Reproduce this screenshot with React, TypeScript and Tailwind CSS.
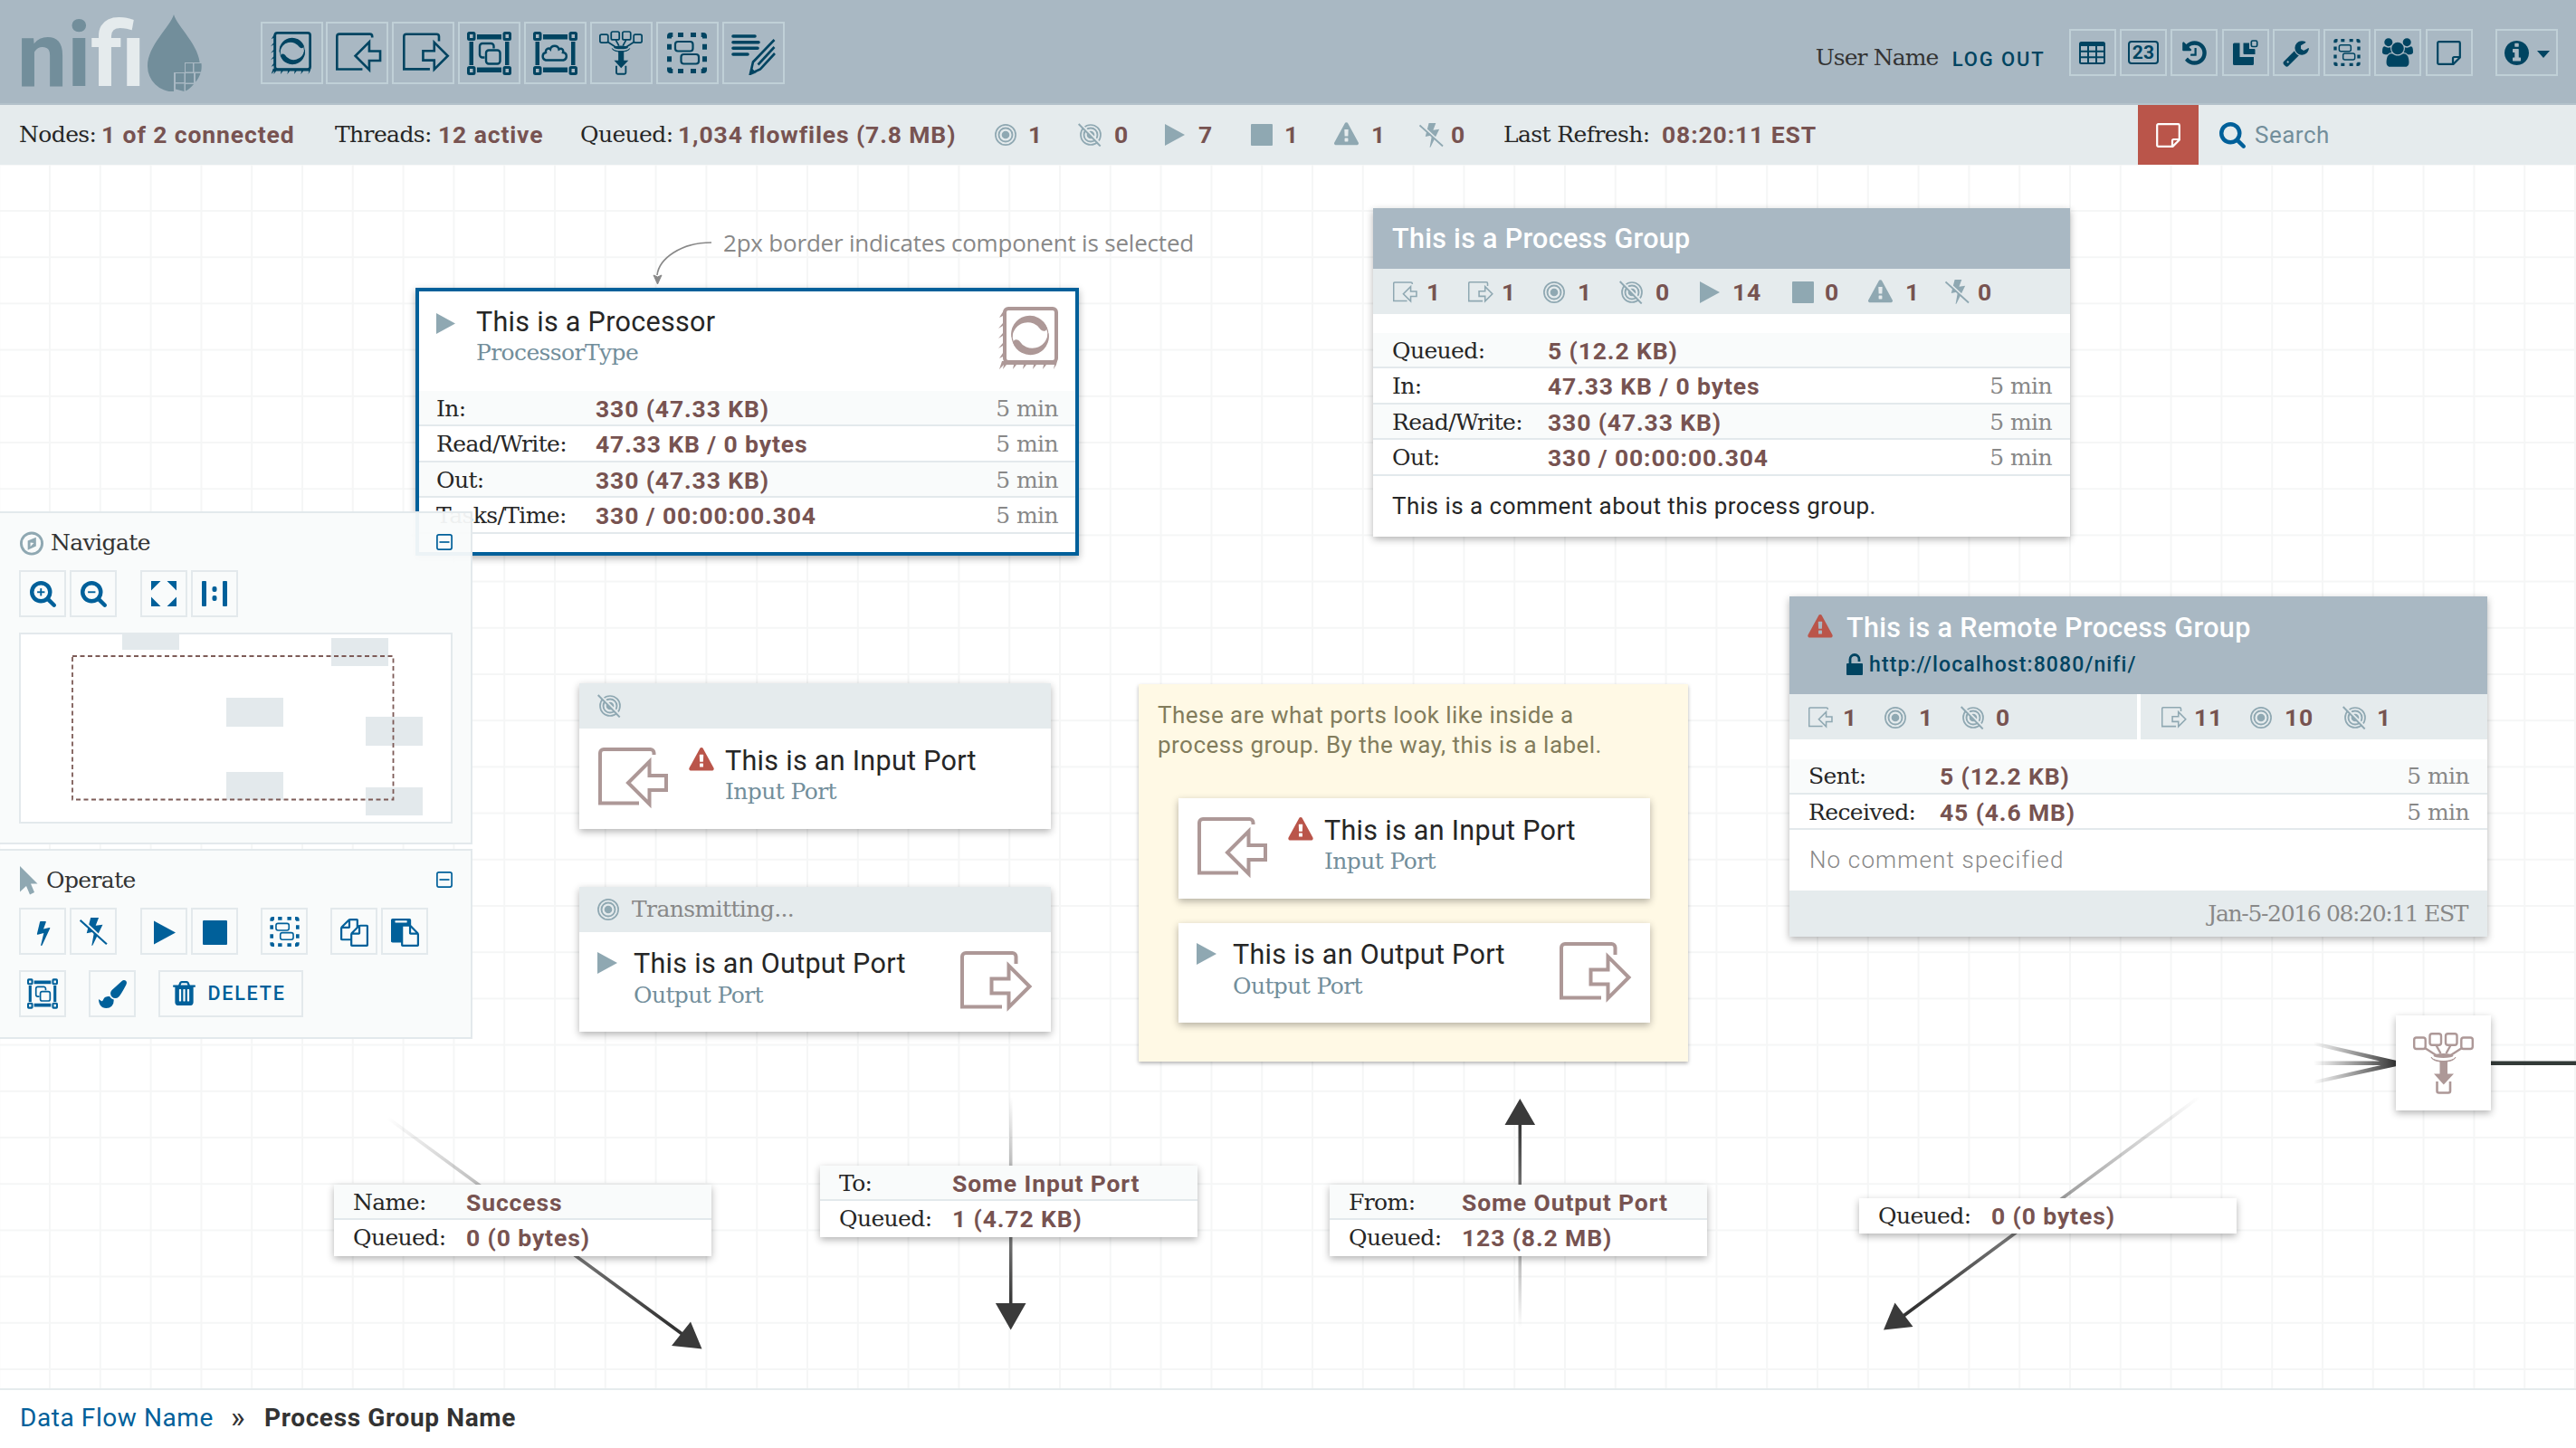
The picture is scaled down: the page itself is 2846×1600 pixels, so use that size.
import type { ReactNode } from "react";

const slab = "font-['Roboto_Slab','DejaVu_Serif',serif] tracking-[-0.6px]";
const shadow = "shadow-[0_3px_8px_rgba(0,0,0,0.3)]";

interface IconProps {
  className?: string;
}

/* ---------- component icons ---------- */

function ProcessorIcon({ className }: IconProps) {
  return (
    <svg viewBox="0 0 66 69" className={className} fill="currentColor">
      <rect x="7" y="2" width="57" height="59" rx="4" fill="none" stroke="currentColor" strokeWidth="4" />
      <path d="M6 60h59l-1 4-3 5 1-5h-9l-4 5 1-5h-8l-4 5 1-5h-8l-4 5 1-5h-8l-4 5 1-5H9l-4 5 1-5-5 5 3-9z" />
      <path d="M6 4 1 12l4-2v8l-5 6 5-3v8l-5 6 5-3v8l-5 6 5-3v8l-4 6 6-3V4z" />
      <path d="M14.500 34A20.500 20.500 0 0 1 54 23.500q-2 5.500-7 2A17 17 0 0 0 15.500 33z" />
      <path d="M55.500 29A20.500 20.500 0 0 1 16 39.500q2-5.500 7-2A17 17 0 0 0 54.500 30z" />
      <circle cx="35" cy="31.500" r="20" fill="none" stroke="currentColor" strokeWidth="1.200" />
    </svg>
  );
}

function InputPortIcon({ className, weight = 4 }: IconProps & { weight?: number }) {
  return (
    <svg viewBox="0 0 78 68" className={className} fill="none" stroke="currentColor" strokeWidth={weight}>
      <path d="M61.500 8V6a4 4 0 0 0-4-4H6a4 4 0 0 0-4 4v55.500h43" />
      <path d="M56.500 15.500V31H75v16H56.500v15.500L33 39z" />
    </svg>
  );
}

function OutputPortIcon({ className, weight = 4 }: IconProps & { weight?: number }) {
  return (
    <svg viewBox="0 0 80 68" className={className} fill="none" stroke="currentColor" strokeWidth={weight}>
      <path d="M61.500 14V6a4 4 0 0 0-4-4H6a4 4 0 0 0-4 4v55.500h44" />
      <path d="M53.500 16v14.500h-19v16h19V62l23-23z" />
    </svg>
  );
}

function GroupFrame() {
  return (
    <g>
      <path d="M11 3h27v5.500H11zM11 39.500h27V45H11zM2.500 11H7v26H2.500zM42 11h4.500v26H42z" fill="currentColor" />
      <g fill="none" stroke="currentColor" strokeWidth="3">
        <rect x="1.500" y="1.500" width="6.500" height="7" rx="1" />
        <rect x="41" y="1.500" width="6.500" height="7" rx="1" />
        <rect x="1.500" y="39.500" width="6.500" height="7" rx="1" />
        <rect x="41" y="39.500" width="6.500" height="7" rx="1" />
      </g>
    </g>
  );
}

function ProcessGroupIcon({ className }: IconProps) {
  return (
    <svg viewBox="0 0 49 48" className={className} fill="none" stroke="currentColor">
      <g stroke="none">
        <GroupFrame />
      </g>
      <path d="M19.500 28.500H17a3 3 0 0 1-3-3V16a3 3 0 0 1 3-3h9.500a3 3 0 0 1 3 3v2.500" strokeWidth="2.400" />
      <rect x="21" y="20.500" width="15.500" height="15" rx="3" strokeWidth="2.400" />
    </svg>
  );
}

function RemoteGroupIcon({ className }: IconProps) {
  return (
    <svg viewBox="0 0 49 48" className={className} fill="none" stroke="currentColor">
      <g stroke="none">
        <GroupFrame />
      </g>
      <path
        d="M14 31.500c-4.500-1-4.500-7.500 0-8.500-.5-4 3-5.500 5-3.500 1-5 8.500-5 9.500 0 3-2 5.500.5 4.500 3.500 5 .5 5 7.500.5 8.500z"
        strokeWidth="2.400"
      />
    </svg>
  );
}

function FunnelIcon({ className }: IconProps) {
  return (
    <svg viewBox="0 0 67 68" className={className} fill="none" stroke="currentColor" strokeWidth="2.400">
      <rect x="1.200" y="5.500" width="12.500" height="12.500" rx="2.500" />
      <rect x="18.500" y="1.200" width="12.500" height="12.500" rx="2.500" />
      <rect x="36" y="1.200" width="12.500" height="12.500" rx="2.500" />
      <rect x="53.300" y="5.500" width="12.500" height="12.500" rx="2.500" />
      <path d="m13 17 14 9M25.500 14l5 9M41.500 14l-5 9M54 17l-14 9" />
      <ellipse cx="33.500" cy="25.500" rx="11" ry="2.600" fill="currentColor" stroke="none" />
      <path d="M20 27c2 7 25 7 27 0-1 1-1 2-4 3-6 2-13 2-19 0-3-1-3-2-4-3z" fill="currentColor" strokeWidth="1" />
      <path d="M29.500 31H38v14.500h7L33.800 57.500 23 45.500h6.500z" fill="currentColor" stroke="none" />
      <path d="M26.500 54v10.500a2 2 0 0 0 2 2h10.500a2 2 0 0 0 2-2V54" strokeWidth="2.600" />
    </svg>
  );
}

function TemplateIcon({ className }: IconProps) {
  return (
    <svg viewBox="0 0 44 45" className={className} fill="none" stroke="currentColor">
      <path
        d="M0 6.500V4a4 4 0 0 1 4-4h2.300v5H5v1.500zM12 0h6v5h-6zM26 0h6v5h-6zM37.700 0H40a4 4 0 0 1 4 4v2.500h-5V5h-1.300zM0 12.700h5v6H0zM0 26.300h5v6H0zM39 12.700h5v6h-5zM39 26.300h5v6h-5zM0 38.500h5V40h1.300v5H4a4 4 0 0 1-4-4zM12 40h6v5h-6zM26 40h6v5h-6zM44 38.500V41a4 4 0 0 1-4 4h-2.300v-5H39v-1.500z"
        fill="currentColor"
        stroke="none"
      />
      <rect x="9" y="10" width="19.500" height="10.500" rx="3" strokeWidth="2.200" />
      <rect x="15.500" y="24" width="19.500" height="10.500" rx="3" strokeWidth="2.200" />
    </svg>
  );
}

function LabelIcon({ className }: IconProps) {
  return (
    <svg viewBox="0 0 49 45" className={className} fill="none" stroke="currentColor" strokeWidth="3.600" strokeLinecap="round">
      <path d="M2 2h24M2 8.700h28M2 15.300h27M2 22h16" />
      <path d="M47.500 6 24 30.500l-3 13 11-5L48 21" strokeWidth="2.600" strokeLinecap="butt" />
      <path d="M47.500 14 29.500 33.500" strokeWidth="2.600" strokeLinecap="butt" />
      <path d="m20.500 44.500 2-7 4.500 4.500z" fill="currentColor" strokeWidth="0.500" />
    </svg>
  );
}

/* ---------- status icons ---------- */

function TransmittingIcon({ className }: IconProps) {
  return (
    <svg viewBox="0 0 24 24" className={className} fill="none" stroke="currentColor" strokeWidth="1.700">
      <circle cx="12" cy="12" r="11.100" />
      <circle cx="12" cy="12" r="7.500" strokeWidth="1.900" />
      <circle cx="12" cy="12" r="4.300" fill="currentColor" stroke="none" />
    </svg>
  );
}

function NotTransmittingIcon({ className, back = "#e5ebed" }: IconProps & { back?: string }) {
  return (
    <svg viewBox="0 0 26 26" className={className} fill="none" stroke="currentColor" strokeWidth="1.700">
      <circle cx="14" cy="13" r="11" />
      <circle cx="14" cy="13" r="7.500" strokeWidth="1.900" />
      <circle cx="14" cy="13" r="4.300" fill="currentColor" stroke="none" />
      <path d="M2.500.500 26 24" stroke={back} strokeWidth="2" />
      <path d="m.700 1 24 24.500" strokeWidth="1.900" />
    </svg>
  );
}

function PlayIcon({ className }: IconProps) {
  return (
    <svg viewBox="0 0 22 24" className={className} fill="currentColor">
      <path d="M0 0v24l22-12z" />
    </svg>
  );
}

function StopIcon({ className }: IconProps) {
  return (
    <svg viewBox="0 0 24 24" className={className} fill="currentColor">
      <rect width="24" height="24" rx="1" />
    </svg>
  );
}

function WarningIcon({ className }: IconProps) {
  return (
    <svg viewBox="0 0 1792 1700" className={className} fill="currentColor">
      <path d="M1024 1375v-190q0-14-9.500-23.500t-22.500-9.500h-192q-13 0-22.500 9.500t-9.500 23.500v190q0 14 9.500 23.500t22.500 9.500h192q13 0 22.500-9.500t9.500-23.500zm-2-374l18-459q0-12-10-19-13-11-24-11h-220q-11 0-24 11-10 7-10 21l17 457q0 10 10 16.500t24 6.500h185q14 0 23.500-6.500t10.500-16.500zm-14-934l768 1408q35 63-2 126-17 29-46.500 46t-63.500 17h-1536q-34 0-63.500-17t-46.500-46q-37-63-2-126l768-1408q17-31 47-49t65-18 65 18 47 49z" />
    </svg>
  );
}

function BoltIcon({ className }: IconProps) {
  return (
    <svg viewBox="430 0 920 1792" className={className} fill="currentColor">
      <path d="M1333 566q18 20 7 44l-540 1157q-13 25-42 25-4 0-14-2-17-5-25.500-19t-4.500-30l197-808-406 101q-4 1-12 1-18 0-31-11-18-15-13-39l201-825q4-14 16-23t28-9h328q19 0 32 12.500t13 29.500q0 8-5 18l-171 463 396-98q8-2 12-2 19 0 34 15z" />
    </svg>
  );
}

function DisabledIcon({ className, back = "#e5ebed" }: IconProps & { back?: string }) {
  return (
    <svg viewBox="0 0 28 28" className={className}>
      <path d="M11 0h8l-3 8 7-1-10 20.500-1 .5 2.500-14L7 15.500z" fill="currentColor" />
      <path d="M2 1.500 28 26" stroke={back} strokeWidth="2.200" />
      <path d="m.500 2.500 26.500 24" stroke="currentColor" strokeWidth="1.900" />
    </svg>
  );
}

/* ---------- toolbar glyphs ---------- */

function Glyph({ d, className, box = "0 0 1792 1792" }: { d: string; className?: string; box?: string }) {
  return (
    <svg viewBox={box} className={className} fill="currentColor">
      <path d={d} />
    </svg>
  );
}

const historyPath =
  "M1664 896q0 156-61 298t-164 245-245 164-298 61q-172 0-327-72.500t-264-204.500q-7-10-6.500-22.500t8.500-20.500l137-138q10-9 25-9 16 2 23 12 73 95 179 147t225 52q104 0 198.500-40.500t163.500-109.500 109.500-163.500 40.500-198.500-40.500-198.500-109.500-163.500-163.500-109.500-198.500-40.500q-98 0-188 35.500t-160 101.500l137 138q31 30 14 69-17 40-59 40h-448q-26 0-45-19t-19-45v-448q0-42 40-59 39-17 69 14l130 129q107-101 244.500-156.500t284.500-55.500q156 0 298 61t245 164 164 245 61 298zm-640-288v448q0 14-9 23t-23 9h-320q-14 0-23-9t-9-23v-64q0-14 9-23t23-9h224v-352q0-14 9-23t23-9h64q14 0 23 9t9 23z";
const wrenchPath =
  "M448 1472q0-26-19-45t-45-19-45 19-19 45 19 45 45 19 45-19 19-45zm644-420l-682 682q-37 37-90 37-52 0-91-37l-106-108q-38-36-38-90 0-53 38-91l681-681q39 98 114.500 173.500t173.500 114.500zm634-435q0 39-23 106-47 134-164.500 217.500t-258.500 83.500q-185 0-316.500-131.500t-131.500-316.500 131.500-316.500 316.500-131.500q58 0 121.500 16.500t107.500 46.500q16 11 16 28t-16 28l-293 169v224l193 107q5-3 79-48.500t135.500-81 70.500-35.500q15 0 23.500 10t8.500 25z";
const usersPath =
  "M593 896q-162 5-265 128h-134q-82 0-138-40.500t-56-118.500q0-353 124-353 6 0 43.500 21t97.500 42.500 119 21.500q67 0 133-23-5 37-5 66 0 139 81 256zm1071 637q0 120-73 189.500t-194 69.500h-874q-121 0-194-69.500t-73-189.500q0-53 3.500-103.500t14-109 26.500-108.500 43-97.500 62-81 85.500-53.500 111.500-20q10 0 43 21.500t73 48 107 48 135 21.500 135-21.500 107-48 73-48 43-21.500q61 0 111.500 20t85.500 53.500 62 81 43 97.500 26.500 108.500 14 109 3.500 103.500zm-1024-1277q0 106-75 181t-181 75-181-75-75-181 75-181 181-75 181 75 75 181zm704 384q0 159-112.500 271.500t-271.500 112.500-271.500-112.500-112.500-271.500 112.500-271.500 271.500-112.500 271.500 112.500 112.500 271.500zm576 225q0 78-56 118.500t-138 40.500h-134q-103-123-265-128 81-117 81-256 0-29-5-66 66 23 133 23 59 0 119-21.500t97.500-42.500 43.500-21q124 0 124 353zm-128-609q0 106-75 181t-181 75-181-75-75-181 75-181 181-75 181 75 75 181z";
const infoPath =
  "M1152 1376v-160q0-14-9-23t-23-9h-96v-512q0-14-9-23t-23-9h-320q-14 0-23 9t-9 23v160q0 14 9 23t23 9h96v320h-96q-14 0-23 9t-9 23v160q0 14 9 23t23 9h448q14 0 23-9t9-23zm-128-896v-160q0-14-9-23t-23-9h-192q-14 0-23 9t-9 23v160q0 14 9 23t23 9h192q14 0 23-9t9-23zm640 416q0 209-103 385.500t-279.500 279.500-385.500 103-385.500-103-279.500-279.500-103-385.500 103-385.500 279.500-279.500 385.500-103 385.500 103 279.500 279.500 103 385.500z";
const searchPath =
  "M1216 832q0-185-131.500-316.500t-316.500-131.500-316.500 131.500-131.500 316.500 131.500 316.500 316.500 131.500 316.500-131.500 131.500-316.500zm512 832q0 52-38 90t-90 38q-54 0-90-38l-343-342q-179 124-399 124-143 0-273.500-55.500t-225-150-150-225-55.500-273.500 55.500-273.500 150-225 225-150 273.500-55.500 273.500 55.500 225 150 150 225 55.500 273.500q0 220-124 399l343 343q37 37 37 90z";
const trashPath =
  "M704 1376v-704q0-14-9-23t-23-9h-64q-14 0-23 9t-9 23v704q0 14 9 23t23 9h64q14 0 23-9t9-23zm256 0v-704q0-14-9-23t-23-9h-64q-14 0-23 9t-9 23v704q0 14 9 23t23 9h64q14 0 23-9t9-23zm256 0v-704q0-14-9-23t-23-9h-64q-14 0-23 9t-9 23v704q0 14 9 23t23 9h64q14 0 23-9t9-23zm-544-992h448l-48-117q-7-9-17-11h-317q-10 2-17 11zm928 32v64q0 14-9 23t-23 9h-96v948q0 83-47 143.500t-113 60.500h-832q-66 0-113-58.500t-47-141.500v-952h-96q-14 0-23-9t-9-23v-64q0-14 9-23t23-9h309l70-167q15-37 54-63t79-26h320q40 0 79 26t54 63l70 167h309q14 0 23 9t9 23z";
const copyPath =
  "M1696 384q40 0 68 28t28 68v1216q0 40-28 68t-68 28h-960q-40 0-68-28t-28-68v-288h-544q-40 0-68-28t-28-68v-672q0-40 20-88t48-76l408-408q28-28 76-48t88-20h416q40 0 68 28t28 68v328q68-40 128-40h416zm-544 213l-299 299h299v-299zm-640-384l-299 299h299v-299zm196 647l316-316v-416h-384v416q0 40-28 68t-68 28h-416v640h512v-256q0-40 20-88t48-76zm956 804v-1152h-384v416q0 40-28 68t-68 28h-416v640h896z";
const pastePath =
  "M768 1664h896v-640h-416q-40 0-68-28t-28-68v-416h-384v1152zm256-1440v-64q0-13-9.500-22.500t-22.500-9.500h-704q-13 0-22.500 9.500t-9.500 22.500v64q0 13 9.500 22.500t22.500 9.500h704q13 0 22.500-9.500t9.500-22.500zm256 672h299l-299-299v299zm512 128v672q0 40-28 68t-68 28h-960q-40 0-68-28t-28-68v-160h-544q-40 0-68-28t-28-68v-1344q0-40 28-68t68-28h1088q40 0 68 28t28 68v328q21 13 36 28l408 408q28 28 48 76t20 88z";
const brushPath =
  "M1615 0q70 0 122.500 46.500t52.500 116.500q0 63-45 151-332 629-465 752-97 91-218 91-126 0-216.500-92.500t-90.500-219.500q0-128 92-212l638-579q59-54 130-54zm-909 1034q39 76 106.500 130t150.500 76l1 71q4 213-129.500 347t-348.500 134q-123 0-218-46.500t-152.500-127.500-86.500-183-29-220q7 5 41 30t62 44.500 59 36.500 46 17q41 0 55-37 25-66 57.500-112.500t69.500-76 88-47.500 103-25.500 125-10.500z";

function TableIcon() {
  return (
    <svg viewBox="0 0 29 25" className="h-[25px] w-[29px]" fill="currentColor">
      <path
        fillRule="evenodd"
        d="M2.500 0h24A2.500 2.500 0 0 1 29 2.500v20a2.500 2.500 0 0 1-2.500 2.500h-24A2.500 2.500 0 0 1 0 22.500v-20A2.500 2.500 0 0 1 2.500 0zM2 5v4.700h7V5zm9 0v4.700h7V5zm9 0v4.700h7V5zM2 11.700v4.600h7v-4.600zm9 0v4.600h7v-4.600zm9 0v4.600h7v-4.600zM2 18.300V23h7v-4.700zm9 0V23h7v-4.700zm9 0V23h7v-4.700z"
      />
    </svg>
  );
}

function ProvenanceIcon() {
  return (
    <svg viewBox="0 0 28 28" className="-mt-[1px] h-[28px] w-[28px]" fill="currentColor">
      <path d="M1.500 3.500h6V19H23v7.500a1.500 1.500 0 0 1-1.500 1.500h-20A1.500 1.500 0 0 1 0 26.500V5a1.500 1.500 0 0 1 1.500-1.500z" />
      <path d="M11.500 3.500H18V10h5.500a1 1 0 0 1 1 1v5h-12a1 1 0 0 1-1-1z" />
      <rect x="20.300" y="1" width="6.400" height="6.500" rx="1.500" fill="none" stroke="currentColor" strokeWidth="1.700" />
    </svg>
  );
}

function NoteIcon() {
  return (
    <svg viewBox="0 0 27 27" className="size-[27px]" fill="none" stroke="currentColor" strokeWidth="2.200">
      <path d="M2.500 1.200h22a1.300 1.300 0 0 1 1.300 1.300v16l-7.300 7.300h-16a1.300 1.300 0 0 1-1.300-1.300v-22a1.300 1.300 0 0 1 1.300-1.300z" />
      <path d="M18 26v-6.500a1.500 1.500 0 0 1 1.500-1.500H26" />
    </svg>
  );
}

function ZoomIcon({ plus }: { plus?: boolean }) {
  return (
    <svg viewBox="64 128 1664 1664" className="size-[29px]" fill="currentColor">
      <path d={searchPath} />
      <path d="M530 778h476v108H530z" />
      {plus && <path d="M714 594h108v476H714z" />}
    </svg>
  );
}

function FitIcon() {
  return (
    <svg viewBox="0 0 28 28" className="size-[28px]" fill="currentColor">
      <path d="M0 0h10.500L0 10.500zM28 0v10.500L17.500 0zM0 28V17.500L10.500 28zM28 28H17.500L28 17.500z" />
    </svg>
  );
}

function ActualSizeIcon() {
  return (
    <svg viewBox="0 0 28 28" className="size-[28px]" fill="currentColor">
      <rect width="5" height="28" rx="1" />
      <rect x="23" width="5" height="28" rx="1" />
      <rect x="11.500" y="6" width="5" height="6" rx="2" />
      <rect x="11.500" y="16" width="5" height="6" rx="2" />
    </svg>
  );
}

function CollapseIcon() {
  return (
    <svg viewBox="0 0 18 18" className="size-[18px] text-[#00609a]" fill="none" stroke="currentColor" strokeWidth="1.700">
      <rect x="0.900" y="0.900" width="16.200" height="16.200" rx="2" />
      <path d="M3.500 9h11" />
    </svg>
  );
}

/* ---------- top bars ---------- */

function Logo() {
  return (
    <div className="flex h-full w-[266px] items-start pl-[19px]">
      <div className="w-[144px] origin-left scale-x-[0.985] font-[Roboto] text-[100px] leading-[122px] font-bold whitespace-nowrap text-[#728e9b]">
        ni<span className="text-[#e5ebed]">fi</span>
      </div>
      <svg viewBox="0 0 60 85" className="mt-[16px] h-[85px] w-[60px]">
        <path d="M29 0c4 14 29 34 29 57a28.500 28 0 0 1-58 0C0 34 25 14 29 0z" fill="#728e9b" />
        <path d="M41 53h19v32H29V64h12z" fill="#a9b8c3" />
        <path
          d="M42 54h8v9.500h-8zM51.500 54h8c.5 4 0 7-.5 9.500h-7.500zM31 65h9.500v10H31zM42 65h9v10.500h-9zM53 65h5.500c-1.500 4-3 7-5.500 9.500zM31 76.500h9.500v8.500l-9.500-2.500zM42 77h9c-3 3.500-5.500 6-9 7.500z"
          fill="#728e9b"
        />
      </svg>
    </div>
  );
}

function Tool({ children }: { children: ReactNode }) {
  return (
    <div className="flex h-[69px] w-[69px] items-center justify-center border-2 border-[#c0d0d7]">{children}</div>
  );
}

function SmallTool({ children }: { children: ReactNode }) {
  return (
    <div className="flex h-[52px] w-[52px] items-center justify-center border-2 border-[#c0d0d7]">{children}</div>
  );
}

function Header() {
  return (
    <header className="flex h-[116px] border-b-2 border-[#b4c2cb] bg-[#a9b8c3] text-[#004461]">
      <Logo />
      <div className="mt-[24px] ml-[21.500px] flex gap-[3.900px]">
        <Tool><ProcessorIcon className="-ml-[2px] h-[47px] w-[45px]" /></Tool>
        <Tool><InputPortIcon className="ml-1 h-[45px] w-[51px]" /></Tool>
        <Tool><OutputPortIcon className="ml-[6px] h-[45px] w-[52px]" /></Tool>
        <Tool><ProcessGroupIcon className="h-[48px] w-[49px]" /></Tool>
        <Tool><RemoteGroupIcon className="h-[48px] w-[49px]" /></Tool>
        <Tool><FunnelIcon className="h-[49px] w-[48px]" /></Tool>
        <Tool><TemplateIcon className="h-[45px] w-[44px]" /></Tool>
        <Tool><LabelIcon className="mt-1 h-[45px] w-[49px]" /></Tool>
      </div>
      <div className="ml-auto flex pr-[20px]">
        <div className="mt-[46px] flex h-[36px] items-center">
          <span className="w-[151px] font-['Roboto_Slab','DejaVu_Serif',serif] text-[25px] tracking-[-0.900px] whitespace-nowrap text-[#333]">
            User Name
          </span>
          <span className="w-[129px] pt-[2px] font-[Roboto] text-[22px] font-medium tracking-[1.900px] whitespace-nowrap">LOG OUT</span>
        </div>
        <div className="mt-[32px] flex gap-[4.300px]">
          <SmallTool><TableIcon /></SmallTool>
          <SmallTool>
            <div className="flex h-[26px] w-[34px] items-center justify-center rounded-[4px] border-2 border-current font-[Roboto] text-[21px] leading-none font-bold">
              23
            </div>
          </SmallTool>
          <SmallTool><Glyph d={historyPath} className="size-[31px]" /></SmallTool>
          <SmallTool><ProvenanceIcon /></SmallTool>
          <SmallTool><Glyph d={wrenchPath} className="size-[31px]" /></SmallTool>
          <SmallTool><TemplateIcon className="h-[30px] w-[30px]" /></SmallTool>
          <SmallTool><Glyph d={usersPath} box="0 0 1920 1792" className="h-[32px] w-[34px]" /></SmallTool>
          <SmallTool><NoteIcon /></SmallTool>
          <div className="ml-[21px] flex h-[52px] w-[69px] items-center justify-center gap-[9px] border-2 border-[#c0d0d7]">
            <Glyph d={infoPath} box="128 128 1536 1536" className="size-[27px]" />
            <svg viewBox="0 0 14 8" className="mt-[4px] h-[8px] w-[14px]" fill="currentColor">
              <path d="M0 0h14L7 8z" />
            </svg>
          </div>
        </div>
      </div>
    </header>
  );
}

const valueText = "font-[Roboto] text-[26.5px] font-bold tracking-[0.88px] text-[#775351] whitespace-nowrap";
const labelText = `text-[25px] text-[#262626] whitespace-nowrap ${slab}`;
const titleText = "font-[Roboto] text-[30.5px] leading-[38px] tracking-[0.3px] whitespace-nowrap text-[#262626]";

function Count({ icon, iconWidth, value, width }: { icon: ReactNode; iconWidth: string; value: string; width: string }) {
  return (
    <div className={`flex shrink-0 items-center ${width}`}>
      <div className={`shrink-0 text-[#8fa8b2] ${iconWidth}`}>{icon}</div>
      <span className={valueText}>{value}</span>
    </div>
  );
}

function StatusBar() {
  return (
    <div className="flex h-[66px] items-center bg-[#e5ebed] pl-[21px]">
      <span className={`w-[91px] ${labelText}`}>Nodes:</span>
      <span className={`w-[258px] ${valueText}`}>1 of 2 connected</span>
      <span className={`w-[114px] ${labelText}`}>Threads:</span>
      <span className={`w-[157px] ${valueText}`}>12 active</span>
      <span className={`w-[108px] ${labelText}`}>Queued:</span>
      <span className={`w-[350px] ${valueText}`}>1,034 flowfiles (7.8 MB)</span>
      <Count icon={<TransmittingIcon className="size-[24px]" />} iconWidth="w-[37px]" value="1" width="w-[92px]" />
      <Count icon={<NotTransmittingIcon className="size-[26px]" />} iconWidth="w-[40px]" value="0" width="w-[96px]" />
      <Count icon={<PlayIcon className="h-[24px] w-[22px]" />} iconWidth="w-[37px]" value="7" width="w-[95px]" />
      <Count icon={<StopIcon className="size-[24px]" />} iconWidth="w-[37px]" value="1" width="w-[92px]" />
      <Count icon={<WarningIcon className="-mt-[2px] h-[26px] w-[27px]" />} iconWidth="w-[41px]" value="1" width="w-[94px]" />
      <Count icon={<DisabledIcon className="size-[27px]" />} iconWidth="w-[35px]" value="0" width="w-[93px]" />
      <span className={`w-[175px] ${labelText}`}>Last Refresh:</span>
      <span className={`w-[526px] ${valueText}`}>08:20:11 EST</span>
      <div className="flex h-full w-[67px] items-center justify-center bg-[#ba554a] text-white">
        <NoteIcon />
      </div>
      <Glyph d={searchPath} box="64 128 1664 1664" className="ml-[23px] size-[29px] text-[#00609a]" />
      <span className="ml-[10px] font-[Roboto] text-[26px] tracking-[0.500px] text-[#728e9b]">Search</span>
    </div>
  );
}

/* ---------- canvas cards ---------- */

interface RowProps {
  label: string;
  value: string;
  time?: string;
  labelWidth: string;
  padding?: string;
  striped?: boolean;
  last?: boolean;
}

function Row({ label, value, time, labelWidth, padding = "pr-[20px] pl-[21px]", striped, last }: RowProps) {
  return (
    <div
      className={`flex h-[39.400px] items-center ${padding} ${striped ? "bg-[#f9fbfb]" : "bg-white"} ${
        last ? "" : "border-b-2 border-[#e3e9ec] pt-[2px]"
      }`}
    >
      <span className={`${labelWidth} ${labelText}`}>{label}</span>
      <span className={valueText}>{value}</span>
      {time && <span className={`ml-auto text-[25px] text-[#888] ${slab}`}>{time}</span>}
    </div>
  );
}

function ProcessorCard() {
  const inset = "pr-[19px] pl-[19px]";
  return (
    <div className={`absolute top-[136px] left-[459px] h-[296px] w-[733px] border-4 border-[#00609a] bg-white ${shadow}`}>
      <div className="flex h-[110px] pr-[19px] pl-[19px]">
        <PlayIcon className="mt-[24px] h-[23px] w-[21px] text-[#8fa8b2]" />
        <div className="mt-[15px] ml-[23px]">
          <div className={titleText}>This is a Processor</div>
          <div className={`text-[25px] leading-[30px] text-[#728e9b] ${slab}`}>ProcessorType</div>
        </div>
        <ProcessorIcon className="mt-[17px] ml-auto h-[69px] w-[66px] text-[#ad9897]" />
      </div>
      <Row striped padding={inset} labelWidth="w-[176px]" label="In:" value="330 (47.33 KB)" time="5 min" />
      <Row padding={inset} labelWidth="w-[176px]" label="Read/Write:" value="47.33 KB / 0 bytes" time="5 min" />
      <Row striped padding={inset} labelWidth="w-[176px]" label="Out:" value="330 (47.33 KB)" time="5 min" />
      <Row padding={inset} labelWidth="w-[176px]" label="Tasks/Time:" value="330 / 00:00:00.304" time="5 min" />
    </div>
  );
}

function ProcessGroupCard() {
  return (
    <div className={`absolute top-[48px] left-[1517px] h-[363px] w-[770px] bg-white ${shadow}`}>
      <div className="flex h-[67px] items-center bg-[#a9b8c3] px-[21px] font-[Roboto] text-[30.500px] font-medium tracking-[0.300px] text-white">
        This is a Process Group
      </div>
      <div className="flex h-[50px] items-center bg-[#e5ebed] pt-[1px] pl-[22px]">
        <Count icon={<InputPortIcon weight={4.500} className="h-[24px] w-[27px]" />} iconWidth="w-[37px]" value="1" width="w-[83px]" />
        <Count icon={<OutputPortIcon weight={4.500} className="h-[24px] w-[28px]" />} iconWidth="w-[37px]" value="1" width="w-[83px]" />
        <Count icon={<TransmittingIcon className="size-[24px]" />} iconWidth="w-[38px]" value="1" width="w-[84px]" />
        <Count icon={<NotTransmittingIcon className="size-[26px]" />} iconWidth="w-[40px]" value="0" width="w-[89px]" />
        <Count icon={<PlayIcon className="h-[24px] w-[22px]" />} iconWidth="w-[36px]" value="14" width="w-[102px]" />
        <Count icon={<StopIcon className="size-[24px]" />} iconWidth="w-[36px]" value="0" width="w-[84px]" />
        <Count icon={<WarningIcon className="-mt-[2px] h-[26px] w-[27px]" />} iconWidth="w-[41px]" value="1" width="w-[85px]" />
        <Count icon={<DisabledIcon className="size-[27px]" />} iconWidth="w-[36px]" value="0" width="w-[60px]" />
      </div>
      <div className="mt-[21px]">
        <Row striped labelWidth="w-[172px]" label="Queued:" value="5 (12.2 KB)" />
        <Row labelWidth="w-[172px]" label="In:" value="47.33 KB / 0 bytes" time="5 min" />
        <Row striped labelWidth="w-[172px]" label="Read/Write:" value="330 (47.33 KB)" time="5 min" />
        <Row labelWidth="w-[172px]" label="Out:" value="330 / 00:00:00.304" time="5 min" />
      </div>
      <div className="flex h-[67px] items-center px-[21px] font-[Roboto] text-[26px] tracking-[0.480px] text-[#262626]">
        This is a comment about this process group.
      </div>
    </div>
  );
}

function RemoteGroupCard() {
  return (
    <div className={`absolute top-[477px] left-[1977px] h-[376px] w-[771px] bg-white ${shadow}`}>
      <div className="flex h-[108px] bg-[#a9b8c3] pl-[20px]">
        <WarningIcon className="mt-[20px] h-[26px] w-[28px] text-[#ba554a]" />
        <div className="mt-[16px] ml-[15px] font-[Roboto] font-medium">
          <div className="text-[30.500px] leading-[38px] tracking-[0.350px] text-white">This is a Remote Process Group</div>
          <div className="mt-[8px] flex h-[28px] items-center text-[#004461]">
            <svg viewBox="0 0 18 24" className="-mt-[2px] h-[24px] w-[18px]">
              <path d="M4 12V6.500a5 5 0 0 1 10 0V9" fill="none" stroke="currentColor" strokeWidth="2.800" />
              <rect y="11" width="18" height="13" rx="1" fill="currentColor" />
            </svg>
            <span className="ml-[7px] text-[23px] tracking-[1.100px]">http://localhost:8080/nifi/</span>
          </div>
        </div>
      </div>
      <div className="flex h-[50px] gap-[4px]">
        <div className="flex w-[384px] items-center bg-[#e5ebed] pt-[2px] pl-[21px]">
          <Count icon={<InputPortIcon weight={4.500} className="h-[24px] w-[27px]" />} iconWidth="w-[38px]" value="1" width="w-[84px]" />
          <Count icon={<TransmittingIcon className="size-[24px]" />} iconWidth="w-[38px]" value="1" width="w-[84px]" />
          <Count icon={<NotTransmittingIcon className="size-[26px]" />} iconWidth="w-[39px]" value="0" width="w-[70px]" />
        </div>
        <div className="flex flex-1 items-center bg-[#e5ebed] pt-[2px] pl-[23px]">
          <Count icon={<OutputPortIcon weight={4.500} className="h-[24px] w-[28px]" />} iconWidth="w-[36px]" value="11" width="w-[98px]" />
          <Count icon={<TransmittingIcon className="size-[24px]" />} iconWidth="w-[38px]" value="10" width="w-[102px]" />
          <Count icon={<NotTransmittingIcon className="size-[26px]" />} iconWidth="w-[38px]" value="1" width="w-[60px]" />
        </div>
      </div>
      <div className="mt-[21.500px]">
        <Row striped labelWidth="w-[145px]" label="Sent:" value="5 (12.2 KB)" time="5 min" />
        <Row labelWidth="w-[145px]" label="Received:" value="45 (4.6 MB)" time="5 min" />
      </div>
      <div className="flex h-[67px] items-center px-[22px] font-[Roboto] text-[26px] font-light tracking-[1.150px] text-[#888]">
        No comment specified
      </div>
      <div className="flex h-[51px] items-center justify-end bg-[#e5ebed] pr-[22px] font-['Roboto_Slab','DejaVu_Serif',serif] text-[25px] tracking-[-1.350px] text-[#888]">
        Jan-5-2016 08:20:11 EST
      </div>
    </div>
  );
}

function InputPortBody() {
  return (
    <div className="flex h-[111px] bg-white pl-[21px]">
      <InputPortIcon className="mt-[21px] h-[68px] w-[78px] text-[#ad9897]" />
      <WarningIcon className="mt-[21px] ml-[22px] h-[26px] w-[28px] text-[#ba554a]" />
      <div className="mt-[17px] ml-[12px]">
        <div className={titleText}>This is an Input Port</div>
        <div className={`text-[25px] leading-[30px] text-[#728e9b] ${slab}`}>Input Port</div>
      </div>
    </div>
  );
}

function OutputPortBody() {
  return (
    <div className="flex h-[110px] bg-white pr-[20px] pl-[20px]">
      <PlayIcon className="mt-[22px] h-[24px] w-[22px] text-[#8fa8b2]" />
      <div className="mt-[16px] ml-[18px]">
        <div className={titleText}>This is an Output Port</div>
        <div className={`text-[25px] leading-[31px] text-[#728e9b] ${slab}`}>Output Port</div>
      </div>
      <OutputPortIcon className="mt-[21px] ml-auto h-[68px] w-[80px] text-[#ad9897]" />
    </div>
  );
}

function Connection({ className, name, target, queued }: { className: string; name?: string; target?: string; queued: string }) {
  return (
    <div className={`absolute w-[417px] bg-white ${shadow} ${className}`}>
      {name && target && <Row striped labelWidth="w-[125px]" label={name} value={target} />}
      <Row last labelWidth="w-[125px]" label="Queued:" value={queued} />
    </div>
  );
}

// paths run from the faded end towards the arrow head
function Connectors() {
  return (
    <svg width="2846" height="1352" viewBox="0 182 2846 1352" className="absolute top-0 left-0">
      <defs>
        <pattern id="grid" x="54" y="232" width="55.800" height="51.200" patternUnits="userSpaceOnUse">
          <path d="M0 0h55.800v2H2v49.200H0z" fill="#f5f6f6" />
        </pattern>
        <linearGradient id="fadeA" gradientUnits="userSpaceOnUse" x1="428" y1="1235" x2="775" y2="1490">
          <stop offset="0" stopColor="#333" stopOpacity="0" />
          <stop offset="0.900" stopColor="#333" />
        </linearGradient>
        <linearGradient id="fadeB" gradientUnits="userSpaceOnUse" x1="0" y1="1212" x2="0" y2="1469">
          <stop offset="0" stopColor="#333" stopOpacity="0" />
          <stop offset="0.900" stopColor="#333" />
        </linearGradient>
        <linearGradient id="fadeC" gradientUnits="userSpaceOnUse" x1="0" y1="1467" x2="0" y2="1214">
          <stop offset="0" stopColor="#333" stopOpacity="0" />
          <stop offset="0.900" stopColor="#333" />
        </linearGradient>
        <linearGradient id="fadeD" gradientUnits="userSpaceOnUse" x1="2430" y1="1212" x2="2081" y2="1469">
          <stop offset="0" stopColor="#333" stopOpacity="0" />
          <stop offset="0.900" stopColor="#333" />
        </linearGradient>
        <linearGradient id="fadeE" gradientUnits="userSpaceOnUse" x1="2556" y1="0" x2="2648" y2="0">
          <stop offset="0" stopColor="#333" stopOpacity="0" />
          <stop offset="1" stopColor="#333" />
        </linearGradient>
      </defs>
      <rect y="182" width="2846" height="1352" fill="url(#grid)" />
      <g strokeWidth="3.600">
        <path d="m428 1235 327 240" stroke="url(#fadeA)" />
        <path d="M1115 1212h3.500v230h-3.500z" fill="url(#fadeB)" />
        <path d="M1677.500 1467h3.500v-226h-3.500z" fill="url(#fadeC)" />
        <path d="m2430 1212-327 242" stroke="url(#fadeD)" />
      </g>
      <path d="M775.500 1490.500 763 1460.500 742 1487zM1116.700 1469.500l16.800-29.500h-33.600zM1679.300 1214l16.800 29h-33.600zM2081 1469.500l12.500-30 20 26.500z" fill="#3a3a3a" />
      <g fill="url(#fadeE)">
        <path d="m2556 1151 92 21v5l-92-22zM2556 1172.500h92v4.500h-92zM2556 1194l92-21v5l-92 20z" />
      </g>
      <path d="M2750 1172.500h96v4.500h-96z" fill="#333a38" />
      <path d="M786 268c-34 0-58 18-60 36" fill="none" stroke="#888" strokeWidth="1.600" />
      <path d="m726.500 314-4.500-10 4.500 2 4.500-2z" fill="#888" stroke="#888" />
    </svg>
  );
}

/* ---------- side panels ---------- */

function PanelButton({ children, className = "w-[52px]" }: { children: ReactNode; className?: string }) {
  return (
    <div className={`flex h-[52px] items-center justify-center border-2 border-[#e3e9ec] ${className}`}>{children}</div>
  );
}

function Navigate() {
  return (
    <div className="h-[368px] w-[522px] border-2 border-l-0 border-[#e3e9ec] bg-[#f9fbfb]/95 pr-[20px] pl-[21px] text-[#00609a]">
      <div className="mt-[16px] flex h-[34px] items-center">
        <svg viewBox="0 0 28 28" className="h-[27px] w-[28px] text-[#8fa8b2]">
          <circle cx="14" cy="14" r="12" fill="none" stroke="currentColor" strokeWidth="3" />
          <path d="M9.500 11 19 7v10l-9.500 4.500z" fill="currentColor" />
          <path d="m12.500 13 4 .5-4 4z" fill="#f9fbfb" />
        </svg>
        <span className={`ml-[7px] text-[25px] text-[#333] ${slab}`}>Navigate</span>
        <div className="-mt-[3px] ml-auto"><CollapseIcon /></div>
      </div>
      <div className="mt-[13px] flex">
        <PanelButton><ZoomIcon plus /></PanelButton>
        <PanelButton className="ml-[4px] w-[52px]"><ZoomIcon /></PanelButton>
        <PanelButton className="ml-[26px] w-[52px]"><FitIcon /></PanelButton>
        <PanelButton className="ml-[4px] w-[52px]"><ActualSizeIcon /></PanelButton>
      </div>
      <svg viewBox="0 0 479 211" className="mt-[17px] block h-[211px] w-[479px]">
        <rect x="1" y="1" width="477" height="209" fill="#fff" stroke="#e3e9ec" strokeWidth="2" />
        <g fill="#e3e9ec">
          <rect x="114" y="0" width="63" height="19" />
          <rect x="345" y="6" width="63" height="31" />
          <rect x="229" y="72" width="63" height="32" />
          <rect x="383" y="93" width="63" height="32" />
          <rect x="229" y="154" width="63" height="31" />
          <rect x="383" y="171" width="63" height="31" />
        </g>
        <rect x="59" y="26" width="354.500" height="158.500" fill="none" stroke="#7d5b57" strokeWidth="1.800" strokeDasharray="5 3.500" />
      </svg>
    </div>
  );
}

function Operate() {
  return (
    <div className="mt-[5px] h-[210px] w-[522px] border-2 border-l-0 border-[#e3e9ec] bg-[#f9fbfb]/95 pr-[20px] pl-[21px] text-[#00609a]">
      <div className="mt-[16px] flex h-[34px] items-center">
        <svg viewBox="0 0 20 32" className="h-[32px] w-[21px] text-[#8fa8b2]" fill="currentColor">
          <path d="M.500 0 20 19.500h-7.500l4 9.500-5 2.500-4-9.500L.500 28.500z" />
        </svg>
        <span className={`ml-[9px] text-[25px] text-[#333] ${slab}`}>Operate</span>
        <div className="-mt-[3px] ml-auto"><CollapseIcon /></div>
      </div>
      <div className="mt-[13px] flex">
        <PanelButton><BoltIcon className="mt-[2px] ml-[2px] h-[29px] w-[16px]" /></PanelButton>
        <PanelButton className="ml-[4px] w-[52px]"><DisabledIcon back="#f9fbfb" className="size-[31px]" /></PanelButton>
        <PanelButton className="ml-[26px] w-[52px]"><PlayIcon className="mt-[2px] ml-[2px] h-[27px] w-[24px]" /></PanelButton>
        <PanelButton className="ml-[4px] w-[52px]"><StopIcon className="mt-[2px] size-[27px]" /></PanelButton>
        <PanelButton className="ml-[25px] w-[52px]"><TemplateIcon className="size-[33px]" /></PanelButton>
        <PanelButton className="ml-[25px] w-[52px]"><Glyph d={copyPath} className="mt-[2px] size-[31px]" /></PanelButton>
        <PanelButton className="ml-[4px] w-[52px]"><Glyph d={pastePath} className="mt-[2px] size-[31px]" /></PanelButton>
      </div>
      <div className="mt-[17px] flex">
        <PanelButton><ProcessGroupIcon className="size-[34px]" /></PanelButton>
        <PanelButton className="ml-[25px] w-[52px]"><Glyph d={brushPath} className="size-[31px]" /></PanelButton>
        <PanelButton className="ml-[25px] w-[160px]">
          <Glyph d={trashPath} box="192 128 1408 1536" className="-mt-[2px] -ml-[3px] h-[27px] w-[25px]" />
          <span className="ml-[13px] font-[Roboto] text-[21.500px] font-medium tracking-[1.800px]">DELETE</span>
        </PanelButton>
      </div>
    </div>
  );
}

function Canvas() {
  return (
    <main className="relative h-[1352px] w-full overflow-hidden bg-white">
      <Connectors />
      <div className="absolute top-[71px] left-[799px] font-['Open_Sans'] text-[26px] leading-[30px] tracking-[-0.200px] whitespace-nowrap text-[#888]">
        2px border indicates component is selected
      </div>

      <ProcessorCard />
      <ProcessGroupCard />
      <RemoteGroupCard />

      <div className={`absolute top-[573px] left-[640px] w-[521px] ${shadow}`}>
        <div className="flex h-[50px] items-center bg-[#e5ebed] pl-[20px]">
          <NotTransmittingIcon className="size-[26px] text-[#8fa8b2]" />
        </div>
        <InputPortBody />
      </div>
      <div className={`absolute top-[798px] left-[640px] w-[521px] ${shadow}`}>
        <div className={`flex h-[50px] items-center bg-[#e5ebed] pl-[20px] text-[25px] text-[#888] ${slab}`}>
          <TransmittingIcon className="mr-[14px] size-[24px] text-[#8fa8b2]" />
          Transmitting...
        </div>
        <OutputPortBody />
      </div>

      <div className="absolute top-[574px] left-[1258px] h-[417px] w-[607px] bg-[#fff9e5] shadow-[0_2px_4px_rgba(0,0,0,0.3)]">
        <div className="pt-[18px] pl-[21px] font-[Roboto] text-[26px] leading-[33px] tracking-[0.470px] text-[#827c5c]">
          These are what ports look like inside a<br />
          process group. By the way, this is a label.
        </div>
        <div className={`mt-[42px] ml-[44px] w-[521px] ${shadow}`}>
          <InputPortBody />
        </div>
        <div className={`mt-[27px] ml-[44px] w-[521px] ${shadow}`}>
          <OutputPortBody />
        </div>
      </div>

      <div className={`absolute top-[940px] left-[2647px] flex size-[105px] items-center justify-center bg-white ${shadow}`}>
        <FunnelIcon className="h-[68px] w-[67px] text-[#ad9897]" />
      </div>

      <Connection className="top-[1127px] left-[369px]" name="Name:" target="Success" queued="0 (0 bytes)" />
      <Connection className="top-[1106px] left-[906px]" name="To:" target="Some Input Port" queued="1 (4.72 KB)" />
      <Connection className="top-[1127px] left-[1469px]" name="From:" target="Some Output Port" queued="123 (8.2 MB)" />
      <Connection className="top-[1142px] left-[2054px]" queued="0 (0 bytes)" />

      <div className="absolute top-[383px] left-0">
        <Navigate />
        <Operate />
      </div>
    </main>
  );
}

function Breadcrumbs() {
  return (
    <footer className="flex h-[66px] items-center border-t-2 border-[#e5ebed] bg-white pb-[3px] pl-[22px] font-[Roboto] text-[28px] whitespace-nowrap">
      <span className="w-[233px] tracking-[0.580px] text-[#00609a]">Data Flow Name</span>
      <span className="w-[37px] text-[33px] text-[#333]">»</span>
      <span className="font-bold tracking-[0.650px] text-[#333]">Process Group Name</span>
    </footer>
  );
}

export default function App() {
  return (
    <div className="flex h-[1600px] w-[2846px] flex-col overflow-hidden bg-white">
      <Header />
      <StatusBar />
      <Canvas />
      <Breadcrumbs />
    </div>
  );
}
